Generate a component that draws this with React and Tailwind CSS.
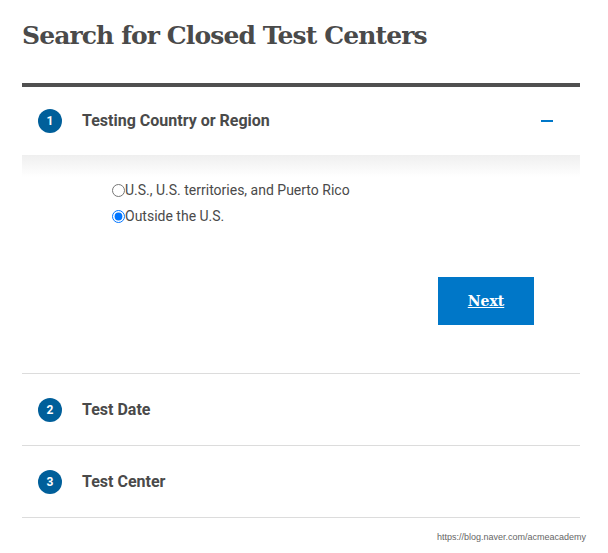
import React from "react";

function Step({ n, label, open }) {
  return (
    <div className="flex h-[68px] items-center pl-4 pr-[27px]">
      <div className="flex h-6 w-6 items-center justify-center rounded-full bg-[#005f9a] text-[12px] font-bold text-white [font-family:Roboto,sans-serif]">
        {n}
      </div>
      <div className="ml-5 text-[16px] font-bold text-[#4a4a4a] [font-family:Roboto,sans-serif]">
        {label}
      </div>
      {open && <div className="ml-auto h-[2px] w-3 bg-[#0077c8]" />}
    </div>
  );
}

export default function App() {
  return (
    <div className="relative h-[553px] w-[608px] bg-white pl-[22px] pr-[28px]">
      <h1 className="pt-[18px] text-[25px] font-bold leading-[36px] tracking-[-0.9px] text-[#4a4a4a] [font-family:'DejaVu_Serif',serif]">
        Search for Closed Test Centers
      </h1>
      <div className="mt-[29px] h-[4px] bg-[#505050]" />
      <Step n="1" label="Testing Country or Region" open />
      <div className="h-[218px] bg-gradient-to-b from-[#efefef] to-white to-[22px] [font-family:Roboto,sans-serif]">
        <div className="flex flex-col gap-[8px] pl-[90px] pt-[26px] text-[14px] text-[#4a4a4a]">
          <label className="flex h-[18px] items-center">
            <input type="radio" name="loc" className="m-0 h-[13px] w-[13px]" />
            <span>U.S., U.S. territories, and Puerto Rico</span>
          </label>
          <label className="flex h-[18px] items-center">
            <input type="radio" name="loc" defaultChecked className="m-0 h-[13px] w-[13px]" />
            <span>Outside the U.S.</span>
          </label>
        </div>
        <div className="mt-[52px] flex justify-end pr-[46px]">
          <button className="flex h-[48px] w-[96px] items-center justify-center bg-[#0077c8] text-[14px] font-bold text-white underline [font-family:'DejaVu_Serif',serif]">
            Next
          </button>
        </div>
      </div>
      <div className="h-px bg-[#dcdcdc]" />
      <div className="flex h-[71px] flex-col justify-center">
        <Step n="2" label="Test Date" />
      </div>
      <div className="h-px bg-[#dcdcdc]" />
      <div className="flex h-[71px] flex-col justify-center">
        <Step n="3" label="Test Center" />
      </div>
      <div className="h-px bg-[#dcdcdc]" />
      <div className="-mr-[6px] flex justify-end pt-[13px] text-[9px] text-[#666] [font-family:'Liberation_Sans',sans-serif]">
        https://blog.naver.com/acmeacademy
      </div>
    </div>
  );
}
